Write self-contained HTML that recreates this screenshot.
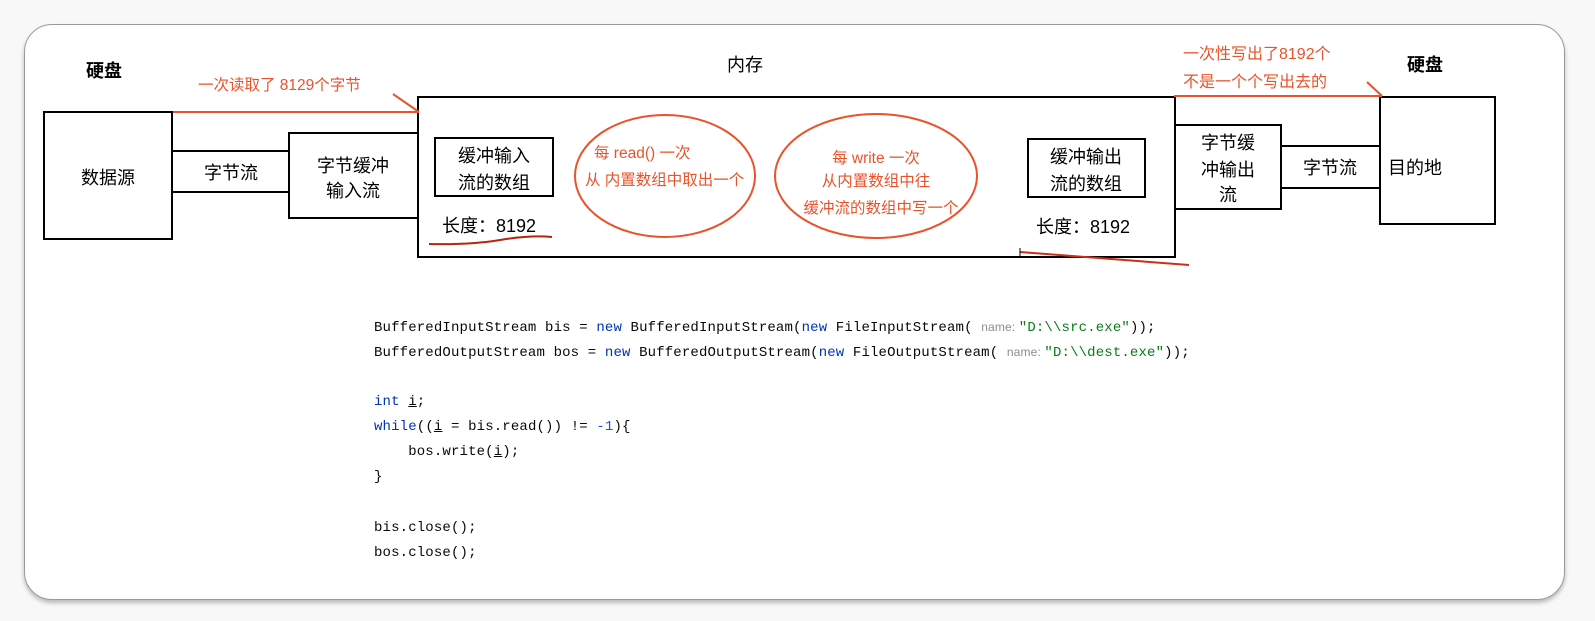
<!DOCTYPE html>
<html><head><meta charset="utf-8"><style>
html,body{margin:0;padding:0;background:#f8f8f8;width:1595px;height:621px;overflow:hidden}
.card{position:absolute;left:24px;top:24px;width:1539px;height:574px;background:#fff;border:1.5px solid #9a9a9a;border-radius:28px;box-shadow:0 3px 4px rgba(0,0,0,.25)}
svg{position:absolute;left:0;top:0}
.cn{font-family:"Liberation Sans","Noto Sans CJK SC",sans-serif;fill:#000}
.r{font-family:"Liberation Sans","Noto Sans CJK SC",sans-serif;fill:#e8532b;font-size:15.5px}
.code{position:absolute;left:374px;font-family:"Liberation Mono",monospace;font-size:14px;letter-spacing:0.15px;color:#080808;white-space:pre;line-height:18px}
.k{color:#0033b3}.s{color:#067d17}.n{color:#1750eb}
.h{font-family:"Liberation Sans",sans-serif;font-size:12px;color:#8c8c8c}
</style></head><body>
<div class="card"></div>
<svg width="1595" height="621" viewBox="0 0 1595 621">
<g fill="none" stroke="#000" stroke-width="2">
<rect x="44" y="112" width="128" height="127"/>
<line x1="172" y1="151" x2="289" y2="151"/><line x1="172" y1="192" x2="289" y2="192"/>
<rect x="289" y="133" width="129" height="85"/>
<rect x="418" y="97" width="757" height="160"/>
<rect x="435" y="138" width="118" height="58"/>
<rect x="1028" y="139" width="117" height="58"/>
<rect x="1175" y="125" width="106" height="84"/>
<line x1="1281" y1="146" x2="1380" y2="146"/><line x1="1281" y1="188" x2="1380" y2="188"/>
<rect x="1380" y="97" width="115" height="127"/>
</g>
<g fill="none" stroke="#e8532b" stroke-width="2">
<line x1="173" y1="112" x2="419" y2="112"/><line x1="393" y1="94" x2="419" y2="112"/>
<line x1="1174" y1="96" x2="1382" y2="96"/><line x1="1367" y1="82" x2="1382" y2="96"/>
<ellipse cx="665" cy="176" rx="90" ry="61"/>
<ellipse cx="876" cy="176" rx="101" ry="62"/>
</g>
<path d="M429 244 Q470 245 500 240 T552 237" fill="none" stroke="#b5260e" stroke-width="2"/>
<path d="M1020 252 L1189 265" fill="none" stroke="#c8301a" stroke-width="2"/>
<line x1="1020" y1="248" x2="1020" y2="256" stroke="#000" stroke-width="1"/>
<g class="cn" font-size="18" text-anchor="middle">
<text x="104" y="77" font-weight="bold">硬盘</text>
<text x="1425" y="71" font-weight="bold">硬盘</text>
<text x="745" y="71">内存</text>
<text x="108" y="184">数据源</text>
<text x="231" y="179">字节流</text>
<text x="353" y="172">字节缓冲</text>
<text x="353" y="197">输入流</text>
<text x="494" y="162">缓冲输入</text>
<text x="494" y="189">流的数组</text>
<text x="1086" y="163">缓冲输出</text>
<text x="1086" y="190">流的数组</text>
<text x="1228" y="149">字节缓</text>
<text x="1228" y="176">冲输出</text>
<text x="1228" y="201">流</text>
<text x="1330" y="174">字节流</text>
<text x="1415" y="174">目的地</text>
<text x="489" y="232">长度：8192</text>
<text x="1083" y="233">长度：8192</text>
</g>
<g class="r">
<text x="198" y="90">一次读取了 8129个字节</text>
<text x="1183" y="59" font-size="16">一次性写出了8192个</text>
<text x="1183" y="87" font-size="16">不是一个个写出去的</text>
<text x="594" y="158">每 read() 一次</text>
<text x="585" y="185">从 内置数组中取出一个</text>
<text x="876" y="163" text-anchor="middle">每 write 一次</text>
<text x="876" y="186" text-anchor="middle">从内置数组中往</text>
<text x="881" y="213" text-anchor="middle">缓冲流的数组中写一个</text>
</g>
</svg>
<div class="code" style="top:318px">BufferedInputStream bis = <span class="k">new</span> BufferedInputStream(<span class="k">new</span> FileInputStream( <span class="h">name: </span><span class="s">"D:\\src.exe"</span>));</div>
<div class="code" style="top:343px">BufferedOutputStream bos = <span class="k">new</span> BufferedOutputStream(<span class="k">new</span> FileOutputStream( <span class="h">name: </span><span class="s">"D:\\dest.exe"</span>));</div>
<div class="code" style="top:393px"><span class="k">int</span> <u>i</u>;</div>
<div class="code" style="top:418px"><span class="k">while</span>((<u>i</u> = bis.read()) != <span class="n">-1</span>){</div>
<div class="code" style="top:443px">    bos.write(<u>i</u>);</div>
<div class="code" style="top:468px">}</div>
<div class="code" style="top:519px">bis.close();</div>
<div class="code" style="top:544px">bos.close();</div>
</body></html>
